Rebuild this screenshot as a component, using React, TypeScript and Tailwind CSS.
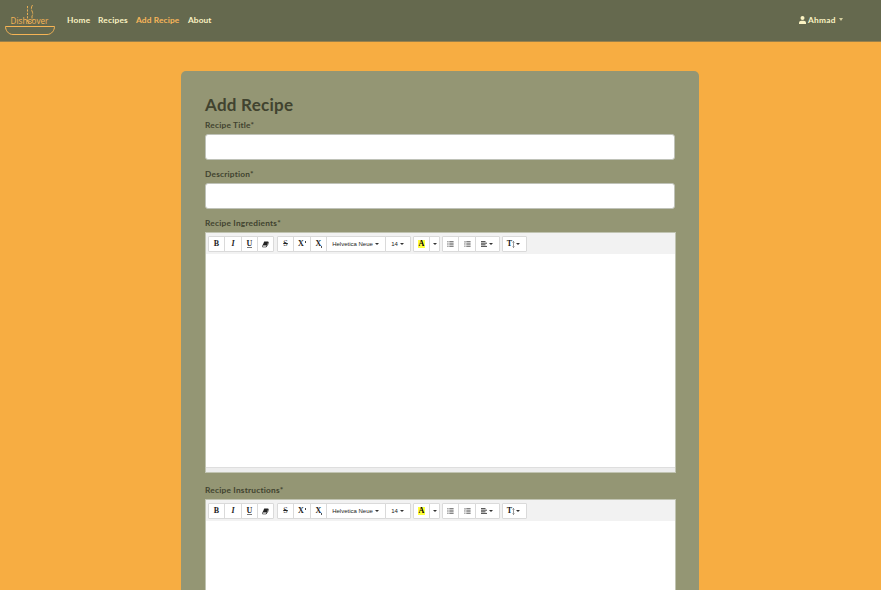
import React from "react";

const heading = "font-['Lato','Noto_Sans',sans-serif]";

function Logo() {
  return (
    <svg width="52" height="36" viewBox="0 0 52 36" fill="none" stroke="#f6b455" strokeWidth="1" className="block">
      <path d="M23.5 2V19" strokeDasharray="2.2 1.2" strokeWidth=".9" />
      <path d="M28.5 1Q26.5 4 28 7T28 12V17" strokeDasharray="4 1" strokeWidth=".9" />
      <path d="M24 20Q25 15.500 28 19" strokeWidth=".8" />
      <text x="6.5" y="20.200" textLength="38" lengthAdjust="spacingAndGlyphs" fontSize="9.300" fontWeight="500" fill="#f6b455" stroke="none" fontFamily="Open Sans, sans-serif">Dishcover</text>
      <path d="M1.500 22.500H50.500C50.500 26 48 30.500 43 30.500H9C4 30.500 1.500 26 1.500 22.500Z" />
    </svg>
  );
}

function Caret() {
  return <span className="ml-[3px] inline-block border-x-[2px] border-t-[2px] border-x-transparent border-t-[#333]" />;
}

function Btn({ w, children }: { w: string; children: React.ReactNode }) {
  return (
    <button className={`-ml-px flex h-4 shrink-0 items-center justify-center border border-[#dadada] bg-white text-[#222] first:ml-0 first:rounded-l-[1px] last:rounded-r-[1px] ${w}`}>
      {children}
    </button>
  );
}

function ListIcon({ numbered = false }: { numbered?: boolean }) {
  return (
    <svg width="7" height="6" viewBox="0 0 7 6" stroke="#666" strokeWidth=".9">
      <path d="M2.300 .6H6.600M2.300 2.200H6.600M2.300 3.800H6.600M2.300 5.400H6.600" />
      <path d={numbered ? "M1 0V1.700M.4 2.700H1.400M.4 3.900H1.400M.4 5.400H1.400" : "M.3 .6H1.500M.3 2.200H1.500M.3 3.800H1.500M.3 5.400H1.500"} />
    </svg>
  );
}

const serif = "font-['Liberation_Serif',serif] text-[8px] leading-none font-bold";
const sans = "font-['Liberation_Sans',sans-serif] text-[6px] leading-none";

function Toolbar() {
  return (
    <div className="flex h-[21px] gap-[2px] bg-[#f2f2f2] pt-[3px] pl-[2px]">
      <div className="mr-px flex">
        <Btn w="w-[17px]"><span className={serif}>B</span></Btn>
        <Btn w="w-[18px]"><span className={`${serif} italic`}>I</span></Btn>
        <Btn w="w-[17px]"><span className={`${serif} h-2 border-b border-[#777] leading-[8px]`}>U</span></Btn>
        <Btn w="w-[17px]">
          <svg width="7" height="7" viewBox="0 0 7 7"><path d="M2.2 .6H6.4L4.9 4.2H.7Z" fill="#222" /><path d="M.7 4.2H4.9L4.2 6H.5ZM4.9 4.2L6.2 1V3L4.2 6" fill="#fff" stroke="#222" strokeWidth=".6" /></svg>
        </Btn>
      </div>
      <div className="flex">
        <Btn w="w-[17px]"><span className={`${serif} font-normal line-through decoration-[0.5px]`}>S</span></Btn>
        <Btn w="w-[18px]"><span className={`${serif} flex items-start`}>X<span className="mt-px ml-px h-[2px] w-px bg-[#444]" /></span></Btn>
        <Btn w="w-[17px]"><span className={`${serif} ml-px flex items-end`}>X<span className="h-[2px] w-px bg-[#555]" /></span></Btn>
        <Btn w="w-[60px]"><span className={`${sans} -mt-px -ml-px`}>Helvetica Neue</span><span className="-ml-px flex"><Caret /></span></Btn>
        <Btn w="w-[26px]"><span className={`${sans} -mt-px -ml-px`}>14</span><span className="-ml-px flex"><Caret /></span></Btn>
      </div>
      <div className="flex">
        <Btn w="w-[17px]"><span className={`${serif} flex h-2 w-[7px] items-center justify-center bg-[#ffff3c] text-black`}>A</span></Btn>
        <Btn w="w-[11px]"><span className="-ml-[3px] flex"><Caret /></span></Btn>
      </div>
      <div className="flex">
        <Btn w="w-[17px]"><ListIcon /></Btn>
        <Btn w="w-[18px]"><ListIcon numbered /></Btn>
        <Btn w="w-[25px]">
          <svg className="-ml-[2px]" width="6" height="6" viewBox="0 0 6 6" stroke="#333" strokeWidth=".9"><path d="M0 .6H4.5M0 2.2H6M0 3.8H4.5M0 5.4H6" /></svg>
          <span className="-ml-px flex"><Caret /></span>
        </Btn>
      </div>
      <div className="flex">
        <Btn w="w-[25px]">
          <span className={`${serif} -ml-[2px]`}>T</span>
          <svg width="3" height="7" viewBox="0 0 3 7"><path d="M1.5 .5V6.500M.5 1.500L1.500 .5L2.500 1.500M.5 5.500L1.500 6.500L2.500 5.500" fill="none" stroke="#555" strokeWidth=".6" /></svg>
          <span className="-ml-[2px] flex"><Caret /></span>
        </Btn>
      </div>
    </div>
  );
}

function Editor() {
  return (
    <div className="flex h-[241px] w-[471px] flex-col border border-[#c1c4b2] bg-white">
      <Toolbar />
      <div className="grow" />
      <div className="h-[5px] border-t border-[#dedede] bg-[#ededed]" />
    </div>
  );
}

function Label({ children }: { children: React.ReactNode }) {
  return <label className={`${heading} block h-[18px] text-[8.3px] leading-[19px] font-bold tracking-[0.22px] text-[#41432f]`}>{children}</label>;
}

function Input() {
  return <div className="mb-[5px] h-[26px] w-[470px] rounded-[3px] border border-[#bfc2b8] bg-white" />;
}

export default function App() {
  return (
    <div className="h-[590px] overflow-hidden bg-[#f7ad42]">
      <nav className={`${heading} flex h-[42px] items-center border-b border-[#99804b] bg-[#65694e] pb-[1px] text-[8.3px] font-bold tracking-[0.1px] text-[#fbf3c3]`}>
        <div className="ml-1 flex w-[63px] pt-[4px]"><Logo /></div>
        <div className="flex gap-2 whitespace-nowrap">
          <a className="w-[23px] tracking-[0.25px]">Home</a>
          <a className="w-[30px] tracking-[0.22px]">Recipes</a>
          <a className="w-11 tracking-[0.15px] text-[#f8b65a]">Add Recipe</a>
          <a>About</a>
        </div>
        <div className="mr-[38px] ml-auto flex items-center">
          <svg width="7" height="8" viewBox="0 0 7 8" fill="#fbf3c3"><circle cx="3.5" cy="2" r="2" /><path d="M0 8V7C0 5.5 1 4.8 2.3 4.8H4.7C6 4.8 7 5.5 7 7V8Z" /></svg>
          <span className="ml-[2px] w-[28px] tracking-[0.3px]">Ahmad</span>
          <span className="mb-[2px] ml-[3px] border-x-[2.5px] border-t-[3px] border-x-transparent border-t-[#d6cf9f]" />
        </div>
      </nav>
      <main className="mt-[29px] ml-[181px] h-[600px] w-[518px] rounded-t-[5px] bg-[#949674] pt-[23px] pl-6">
        <h1 className={`${heading} h-[22px] text-[17px] leading-[22px] font-bold tracking-[0.25px] text-[#41432f]`}>Add Recipe</h1>
        <Label>Recipe Title*</Label>
        <Input />
        <Label>Description*</Label>
        <Input />
        <Label>Recipe Ingredients*</Label>
        <Editor />
        <div className="mt-2"><Label>Recipe Instructions*</Label></div>
        <Editor />
      </main>
    </div>
  );
}
